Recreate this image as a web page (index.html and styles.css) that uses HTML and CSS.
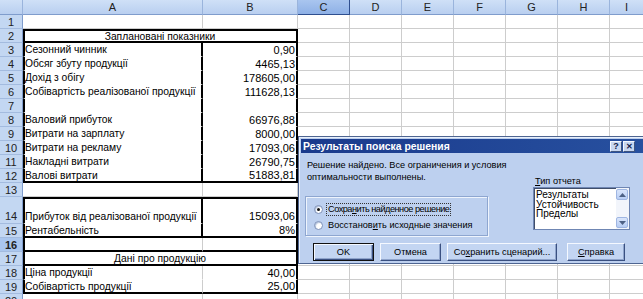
FILE: index.html
```html
<!DOCTYPE html>
<html lang="uk">
<head>
<meta charset="utf-8">
<title>Пошук рішення</title>
<link rel="stylesheet" href="styles.css">
</head>
<body>
<div class="sheet">
  <div class="hd corner"></div><div class="hd">A</div><div class="hd">B</div><div class="hd sel">C</div><div class="hd">D</div><div class="hd">E</div><div class="hd">F</div><div class="hd">G</div><div class="hd">H</div><div class="hd last">I</div>

  <div class="rh">1</div><div class="c"></div><div class="c"></div><div class="rest"></div>
  <div class="rh">2</div><div class="c merged plain box-l box-r box-t box-b">Заплановані показники</div><div class="rest"></div>
  <div class="rh">3</div><div class="c plain box-l box-r">Сезонний чинник</div><div class="c plain box-r num">0,90</div><div class="rest"></div>
  <div class="rh">4</div><div class="c plain box-l box-r">Обсяг збуту продукції</div><div class="c plain box-r num">4465,13</div><div class="rest"></div>
  <div class="rh">5</div><div class="c plain box-l box-r">Дохід з обігу</div><div class="c plain box-r num">178605,00</div><div class="rest"></div>
  <div class="rh">6</div><div class="c plain box-l box-r">Собівартість реалізованої продукції</div><div class="c plain box-r num">111628,13</div><div class="rest"></div>
  <div class="rh">7</div><div class="c plain box-l box-r"></div><div class="c plain box-r num"></div><div class="rest"></div>
  <div class="rh">8</div><div class="c plain box-l box-r">Валовий прибуток</div><div class="c plain box-r num">66976,88</div><div class="rest"></div>
  <div class="rh">9</div><div class="c plain box-l box-r">Витрати на зарплату</div><div class="c plain box-r num">8000,00</div><div class="rest"></div>
  <div class="rh">10</div><div class="c plain box-l box-r">Витрати на рекламу</div><div class="c plain box-r num">17093,06</div><div class="rest"></div>
  <div class="rh">11</div><div class="c plain box-l box-r">Накладні витрати</div><div class="c plain box-r num">26790,75</div><div class="rest"></div>
  <div class="rh">12</div><div class="c plain box-l box-r box-b">Валові витрати</div><div class="c plain box-r box-b num">51883,81</div><div class="rest"></div>
  <div class="rh">13</div><div class="c"></div><div class="c"></div><div class="rest"></div>
  <div class="rh low">14</div><div class="c plain box-l box-r box-t low">Прибуток від реалізованої продукції</div><div class="c plain box-r box-t num low">15093,06</div><div class="rest"></div>
  <div class="rh">15</div><div class="c plain box-l box-r box-b">Рентабельність</div><div class="c plain box-r box-b num">8%</div><div class="rest"></div>
  <div class="rh sel">16</div><div class="c box-l box-b"></div><div class="c box-r box-b"></div><div class="rest"></div>
  <div class="rh">17</div><div class="c merged plain box-l box-r box-b">Дані про продукцію</div><div class="rest"></div>
  <div class="rh">18</div><div class="c plain grid-r box-l">Ціна продукції</div><div class="c plain box-r num">40,00</div><div class="rest"></div>
  <div class="rh">19</div><div class="c plain grid-r box-l box-b">Собівартість продукції</div><div class="c plain box-r box-b num">25,00</div><div class="rest"></div>
  <div class="rh">20</div><div class="c"></div><div class="c"></div><div class="rest"></div>
</div>

<div class="dlg">
  <div class="title">
    <span class="title-text">Результаты поиска решения</span>
    <span class="tbtn">?</span><span class="tbtn close">✕</span>
  </div>
  <div class="body">
    <div class="top">
      <div class="left">
        <div class="msg">Решение найдено. Все ограничения и условия<br>оптимальности выполнены.</div>
        <div class="group">
          <div class="radio-row"><span class="radio on"></span><span class="rlabel focus">Сохра<u>н</u>ить найденное решение</span></div>
          <div class="radio-row"><span class="radio"></span><span class="rlabel">Восстанов<u>и</u>ть исходные значения</span></div>
        </div>
      </div>
      <div class="right">
        <div class="rep-label"><u>Т</u>ип отчета</div>
        <div class="list">
          <div class="items">
            <div>Результаты</div>
            <div>Устойчивость</div>
            <div>Пределы</div>
          </div>
          <div class="sbar">
            <span class="sbtn"><svg width="7" height="4" viewBox="0 0 7 4"><path d="M0 4 L3.5 0 L7 4 Z" fill="#4d6185"/></svg></span>
            <span class="sbtn"><svg width="7" height="4" viewBox="0 0 7 4"><path d="M0 0 L3.5 4 L7 0 Z" fill="#4d6185"/></svg></span>
          </div>
        </div>
      </div>
    </div>
    <div class="buttons">
      <span class="btn def w61">OK</span>
      <span class="btn w61">Отмена</span>
      <span class="btn w110">Со<u>х</u>ранить сценарий...</span>
      <span class="btn w58"><u>С</u>правка</span>
    </div>
  </div>
</div>
</body>
</html>
```

FILE: styles.css
```css
* { box-sizing: border-box; }
html, body { margin: 0; padding: 0; }
body {
  width: 643px;
  height: 299px;
  overflow: hidden;
  position: relative;
  background: #fff;
  color: #000;
  font-family: "Liberation Sans", Arial, sans-serif;
  font-size: 10px;
}

.sheet {
  display: grid;
  grid-template-columns: 23px 180px 95px repeat(6, 52px) 1fr;
  grid-template-rows: 15px repeat(13, 14px) 27px repeat(6, 14px);
}

.hd {
  background: linear-gradient(#cfe0f7, #b9cff0);
  border-right: 1px solid #9ab4dc;
  border-bottom: 1px solid #7f9ccc;
  display: flex;
  align-items: center;
  justify-content: center;
  font-size: 11px;
  color: #222;
}
.hd.sel {
  background: linear-gradient(#a9c5ef, #8eb0e6);
  border-right: 1px solid #2f4f8f;
  border-bottom: 1px solid #2f4f8f;
}
.hd.last { border-right: none; }

.rh {
  background: #c3d7f2;
  border-right: 1px solid #7f9ccc;
  border-bottom: 1px solid #a3bbdf;
  display: flex;
  align-items: center;
  justify-content: center;
  font-size: 11px;
  color: #222;
}
.rh.sel { font-weight: bold; background: #aac6ee; }
.rh.low { align-items: flex-end; padding-bottom: 1px; }

.c {
  border-right: 1px solid #cdcdcd;
  border-bottom: 1px solid #cdcdcd;
  padding: 0 1px 0 1px;
  display: flex;
  align-items: center;
  white-space: nowrap;
  overflow: hidden;
  background: #fff;
  font-size: 10.3px;
}
.c.num { justify-content: flex-end; font-size: 11px; }
.c.low { align-items: flex-end; padding-bottom: 1px; }
.c.merged { grid-column: span 2; justify-content: center; }
.c.plain { border-right-color: #fff; border-bottom-color: #fff; }
.c.grid-r { border-right-color: #cdcdcd; }

.box-l { border-left: 2px solid #000; padding-left: 0; }
.c.box-r { border-right: 2px solid #000; }
.c.box-t { border-top: 2px solid #000; }
.c.box-b { border-bottom: 2px solid #000; }

.rest {
  grid-column: span 7;
  border-bottom: 1px solid #cdcdcd;
  background: repeating-linear-gradient(to right, transparent 0 51px, #cdcdcd 51px 52px);
}

/* dialog */
.dlg {
  position: absolute;
  left: 298px;
  top: 136px;
  width: 345px;
  height: 128px;
  background: #bdd0ef;
  border: 1px solid #4e6591;
  border-right: none;
  box-shadow: inset 1px 1px 0 #e9f0fb;
  padding: 2px 0 0 2px;
  font-size: 9.2px;
}
.title {
  height: 14px;
  display: flex;
  align-items: center;
  background: linear-gradient(to right, #1a3a8c, #27509f);
  color: #fff;
  padding: 0 8px 0 2px;
}
.title-text {
  flex: 1;
  font-weight: bold;
  font-size: 10.4px;
}
.tbtn {
  width: 12px;
  height: 11px;
  margin-left: 1px;
  background: #c8d7f0;
  border: 1px solid;
  border-color: #f4f8ff #3f557f #3f557f #f4f8ff;
  color: #10204a;
  font-weight: bold;
  font-size: 9px;
  line-height: 9px;
  display: flex;
  align-items: center;
  justify-content: center;
}
.tbtn.close { font-size: 8px; }

.body { padding: 6px 0 0 4px; }
.top { display: flex; }
.left { width: 183px; }
.msg {
  margin-left: 2px;
  line-height: 12px;
  white-space: nowrap;
}
.group {
  margin-top: 13px;
  height: 40px;
  border: 1px solid #8ea6d0;
  box-shadow: inset 1px 1px 0 #eef4fd, 1px 1px 0 #eef4fd;
  padding: 6px 0 0 8px;
  display: flex;
  flex-direction: column;
  gap: 4px;
}
.radio-row {
  height: 12px;
  display: flex;
  align-items: center;
  gap: 4px;
  white-space: nowrap;
}
.radio {
  width: 9px;
  height: 9px;
  border-radius: 50%;
  background: #fff;
  border: 1px solid #7a8fb8;
  box-shadow: inset 1px 1px 1px #b8c6de;
  display: flex;
  align-items: center;
  justify-content: center;
}
.radio.on::after {
  content: "";
  width: 3px;
  height: 3px;
  border-radius: 50%;
  background: #111;
}
.rlabel { padding: 0 1px; line-height: 11px; }
.rlabel.focus { outline: 1px dotted #333; outline-offset: 0; letter-spacing: -0.5px; }

.right { margin-left: 45px; padding-top: 16px; }
.rep-label { line-height: 12px; padding-left: 2px; }
.list {
  width: 97px;
  height: 43px;
  display: flex;
  background: #fff;
  border: 1px solid #6f86b3;
  box-shadow: inset 1px 1px 0 #404e6a;
}
.items {
  flex: 1;
  padding: 2px 0 0 2px;
  font-size: 10px;
  line-height: 9.5px;
}
.sbar {
  width: 13px;
  padding: 1px 1px 1px 0;
  display: flex;
  flex-direction: column;
  justify-content: space-between;
  background: #f2f5fb;
}
.sbtn {
  height: 11px;
  border-radius: 2px;
  background: linear-gradient(#d9e5fb, #b7cdf4);
  border: 1px solid #9fb6e2;
  display: flex;
  align-items: center;
  justify-content: center;
}

.buttons {
  margin-top: 7px;
  padding-left: 8px;
  display: flex;
}
.btn {
  height: 18px;
  margin-right: 6px;
  background: #c3d5f2;
  border: 1px solid;
  border-color: #f4f8ff #3a5081 #3a5081 #f4f8ff;
  box-shadow: inset -1px -1px 0 #8fa4cb;
  display: flex;
  align-items: center;
  justify-content: center;
  white-space: nowrap;
}
.btn.def {
  border: 1px solid #111;
  box-shadow: inset 1px 1px 0 #f4f8ff, inset -1px -1px 0 #3a5081, inset -2px -2px 0 #8fa4cb;
}
.w61 { width: 61px; }
.w110 { width: 110px; margin-right: 10px; }
.w58 { width: 58px; }
```
